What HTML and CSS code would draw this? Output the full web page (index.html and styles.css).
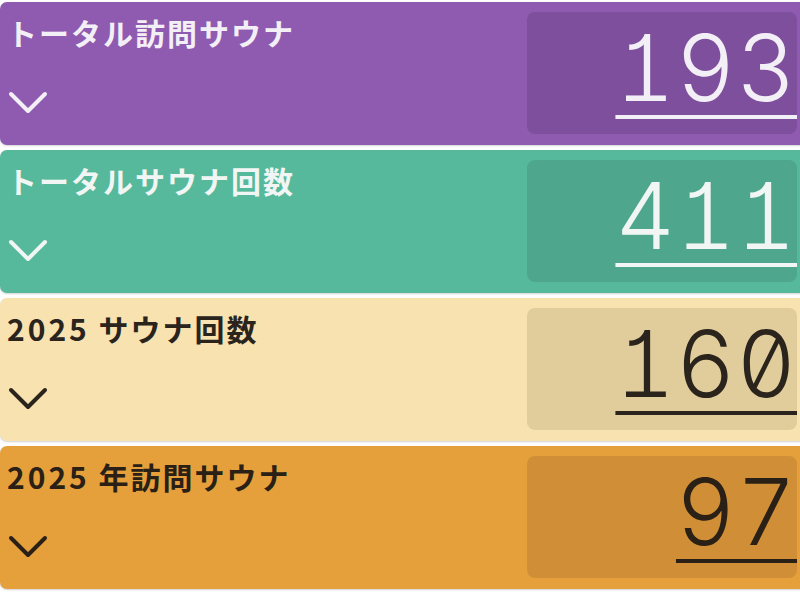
FILE: index.html
```html
<!DOCTYPE html>
<html lang="ja">
<head>
<meta charset="utf-8">
<link rel="stylesheet" href="styles.css">
</head>
<body>
<main class="list">
  <section class="card card-purple">
    <div class="info">
      <h2 class="title">トータル訪問サウナ</h2>
      <svg class="chevron" viewBox="0 0 40 26" aria-hidden="true"><path d="M3 4 L20 21 L37 4"/></svg>
    </div>
    <div class="value"><span class="num">193</span></div>
  </section>
  <section class="card card-green">
    <div class="info">
      <h2 class="title">トータルサウナ回数</h2>
      <svg class="chevron" viewBox="0 0 40 26" aria-hidden="true"><path d="M3 4 L20 21 L37 4"/></svg>
    </div>
    <div class="value"><span class="num">411</span></div>
  </section>
  <section class="card card-yellow">
    <div class="info">
      <h2 class="title"><span class="year">2025</span> サウナ回数</h2>
      <svg class="chevron" viewBox="0 0 40 26" aria-hidden="true"><path d="M3 4 L20 21 L37 4"/></svg>
    </div>
    <div class="value"><span class="num">160</span></div>
  </section>
  <section class="card card-orange">
    <div class="info">
      <h2 class="title"><span class="year">2025</span> 年訪問サウナ</h2>
      <svg class="chevron" viewBox="0 0 40 26" aria-hidden="true"><path d="M3 4 L20 21 L37 4"/></svg>
    </div>
    <div class="value"><span class="num">97</span></div>
  </section>
</main>
</body>
</html>
```
FILE: styles.css
```css
html, body {
  margin: 0;
  padding: 0;
  background: #ffffff;
  overflow: hidden;
}
body {
  width: 800px;
  height: 600px;
}
.list {
  display: flex;
  flex-direction: column;
  gap: 5px;
  padding-top: 2px;
  width: 812px;
}
.card {
  display: flex;
  justify-content: space-between;
  height: 143px;
  box-sizing: border-box;
  padding: 10px 15px 11px 0;
  border-radius: 7px;
  box-shadow: 0 1px 2px rgba(0, 0, 0, 0.18);
}
.card-purple { background: #8f5bb0; color: #f3eff6; }
.card-green { background: #57b99c; color: #f1f6f4; }
.card-yellow { background: #f8e2b0; color: #2a241c; }
.card-orange { background: #e5a03b; color: #2a2016; }

.info {
  display: flex;
  flex-direction: column;
  padding-left: 7px;
}
.title {
  margin: 0;
  font-family: "Noto Sans CJK JP", "Noto Sans", sans-serif;
  font-weight: 700;
  font-size: 30px;
  line-height: 40px;
  letter-spacing: 2px;
}
.year {
  letter-spacing: 3px;
}
.chevron {
  width: 40px;
  height: 26px;
  margin-top: 38px;
  margin-left: 1px;
  fill: none;
  stroke: currentColor;
  stroke-width: 4;
  stroke-linecap: round;
  stroke-linejoin: round;
}
.value {
  width: 270px;
  box-sizing: border-box;
  padding-top: 10px;
  border-radius: 8px;
  display: flex;
  align-items: flex-start;
  justify-content: flex-end;
}
.card-purple .value { background: #7e4f9c; }
.card-green .value { background: #4ea78c; }
.card-yellow .value { background: #e1cd9c; }
.card-orange .value { background: #d08f36; }
.num {
  font-family: "Inter", "DejaVu Sans Mono", monospace;
  font-weight: 300;
  font-size: 92px;
  line-height: 1;
  font-variant-numeric: tabular-nums slashed-zero;
  font-feature-settings: "tnum", "zero", "cv01";
  letter-spacing: 1px;
  text-decoration: underline;
  text-decoration-thickness: 4px;
  text-underline-offset: 14px;
}
```
